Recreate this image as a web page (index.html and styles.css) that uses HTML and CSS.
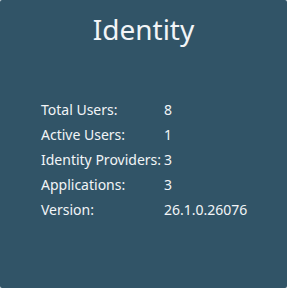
FILE: index.html
```html
<!DOCTYPE html>
<html lang="en">
<head>
    <meta charset="UTF-8">
    <meta name="viewport" content="width=device-width, initial-scale=1.0">
    <title>Identity</title>
    <link rel="stylesheet" href="styles.css">
</head>
<body>
    <div class="tile">
        <h1>Identity</h1>
        <div class="stats">
            <div class="label">Total Users:</div><div class="value">8</div>
            <div class="label">Active Users:</div><div class="value">1</div>
            <div class="label">Identity Providers:</div><div class="value">3</div>
            <div class="label">Applications:</div><div class="value">3</div>
            <div class="label">Version:</div><div class="value">26.1.0.26076</div>
        </div>
    </div>
</body>
</html>
```

FILE: styles.css
```css
body {
    margin: 0;
    background: #e9eef1;
    font-family: "Noto Sans", "Open Sans", sans-serif;
}
.tile {
    width: 287px;
    height: 288px;
    box-sizing: border-box;
    background: #315467;
    color: #f2f5f7;
    border-radius: 2px;
    padding: 9px 0 0 41px;
}
h1 {
    margin: 0 41px 0 0;
    text-align: center;
    font-weight: 400;
    font-size: 28px;
    line-height: 40px;
}
.stats {
    display: grid;
    grid-template-columns: 123px auto;
    grid-auto-rows: 25px;
    margin-top: 48px;
    font-size: 14px;
    line-height: 25px;
}
```
